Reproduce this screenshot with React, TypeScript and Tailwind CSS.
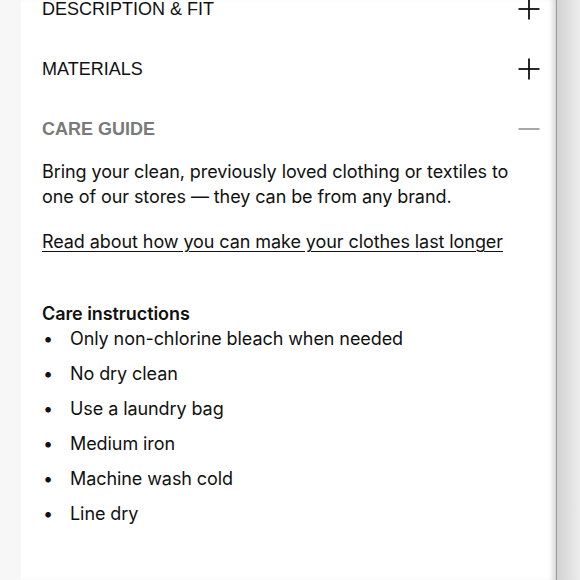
const sans = { fontFamily: '"Liberation Sans", Arial, sans-serif' };

const careItems = [
  'Only non-chlorine bleach when needed',
  'No dry clean',
  'Use a laundry bag',
  'Medium iron',
  'Machine wash cold',
  'Line dry',
];

function ToggleIcon({ open }: { open?: boolean }) {
  return (
    <svg width="22" height="22" viewBox="0 0 22 22" className={open ? 'text-[#8a8a8a]' : 'text-[#111]'}>
      <line x1="0.5" y1="11" x2="21.5" y2="11" stroke="currentColor" strokeWidth={open ? 1.5 : 1.8} />
      {!open && <line x1="11" y1="0.5" x2="11" y2="21.5" stroke="currentColor" strokeWidth="1.8" />}
    </svg>
  );
}

function AccordionHeader({ title, open }: { title: string; open?: boolean }) {
  return (
    <div className="flex h-[60px] items-center justify-between">
      <span
        className={
          open
            ? 'text-[18px] font-bold uppercase text-[#7a7a7a]'
            : 'text-[18px] uppercase text-[#111]'
        }
        style={sans}
      >
        {title}
      </span>
      <ToggleIcon open={open} />
    </div>
  );
}

export default function App() {
  return (
    <div className="flex h-[580px] w-[580px] overflow-hidden bg-[#f7f7f7]">
      <div className="w-[21px] shrink-0 bg-[#f7f7f7]" />

      {/* Product details panel */}
      <div className="w-[535px] shrink-0 bg-white pl-[21px] pr-[16px] shadow-[inset_-6px_0_6px_-4px_rgba(0,0,0,0.22)]">
        <div className="-mt-[21px]">
          <AccordionHeader title="Description & Fit" />
          <AccordionHeader title="Materials" />
          <AccordionHeader title="Care Guide" open />

          <div
            className="text-[18px] leading-[25px] tracking-[-0.08px] text-[#111]"
            style={{ fontFamily: 'Inter, sans-serif' }}
          >
            <p className="pr-4">
              Bring your clean, previously loved clothing or textiles to one of our stores — they can be from any
              brand.
            </p>
            <a href="#" className="mt-5 inline-block underline underline-offset-[3px]">
              Read about how you can make your clothes last longer
            </a>

            <h3 className="mt-[47px] font-semibold">Care instructions</h3>
            <ul className="flex flex-col gap-[10px]">
              {careItems.map((item) => (
                <li key={item} className="flex">
                  <span className="w-[28px] shrink-0 pl-[1px]">•</span>
                  <span>{item}</span>
                </li>
              ))}
            </ul>
          </div>
        </div>
      </div>

      <div className="flex-1 border-l border-[#9a9a9a] bg-gradient-to-r from-[#d2d2d2] to-[#ededed]" />
    </div>
  );
}
